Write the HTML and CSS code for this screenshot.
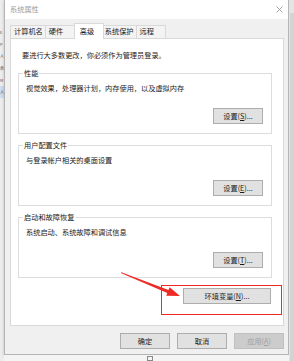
FILE: index.html
```html
<!DOCTYPE html>
<html lang="zh">

<head>
    <meta charset="UTF-8">
    <meta name="viewport" content="width=device-width, initial-scale=1.0">
    <title>系统属性</title>
    <link rel="stylesheet" href="styles.css">
</head>

<body>
    <div class="screen">
        <!-- 背后窗口露出的一条 -->
        <div class="left-strip">
            <div class="frag">E</div>
            <div class="frag">P</div>
            <div class="frag">人</div>
            <div class="frag">表</div>
            <div class="frag">M</div>
            <div class="frag frag-active">人</div>
        </div>

        <div class="main">
            <div class="window">
                <div class="title-bar">
                    <span class="title">系统属性</span>
                    <svg class="close-icon" width="7" height="7" viewBox="0 0 7 7">
                        <path d="M0.5 0.5 L6.5 6.5 M6.5 0.5 L0.5 6.5" stroke="#9a9a9a" stroke-width="0.9" fill="none" />
                    </svg>
                </div>

                <div class="dialog-body">
                    <div class="tabs">
                        <div class="tab">计算机名</div>
                        <div class="tab">硬件</div>
                        <div class="tab tab-active">高级</div>
                        <div class="tab">系统保护</div>
                        <div class="tab">远程</div>
                    </div>

                    <div class="panel">
                        <div class="intro">要进行大多数更改，你必须作为管理员登录。</div>

                        <fieldset class="group">
                            <legend>性能</legend>
                            <div class="group-text">视觉效果，处理器计划，内存使用，以及虚拟内存</div>
                            <div class="group-actions"><button class="btn">设置(<u>S</u>)...</button></div>
                        </fieldset>

                        <fieldset class="group">
                            <legend>用户配置文件</legend>
                            <div class="group-text">与登录帐户相关的桌面设置</div>
                            <div class="group-actions"><button class="btn">设置(<u>E</u>)...</button></div>
                        </fieldset>

                        <fieldset class="group">
                            <legend>启动和故障恢复</legend>
                            <div class="group-text">系统启动、系统故障和调试信息</div>
                            <div class="group-actions"><button class="btn">设置(<u>T</u>)...</button></div>
                        </fieldset>

                        <!-- 红框标注 -->
                        <div class="highlight">
                            <button class="btn btn-wide">环境变量(<u>N</u>)...</button>
                        </div>

                        <!-- 红色箭头 -->
                        <svg class="arrow" width="80" height="32" viewBox="111 269 80 32">
                            <polygon points="120.8,272.9 121.3,272.2 168.5,290.1 169.6,287.3 180,296 166.2,295.7 167.3,292.9" fill="#ee2a24" />
                        </svg>
                    </div>

                    <div class="footer">
                        <button class="btn">确定</button>
                        <button class="btn">取消</button>
                        <button class="btn btn-disabled">应用(<u>A</u>)</button>
                    </div>
                </div>
            </div>

            <div class="bottom-strip">
                <span class="task-icon"></span>
            </div>
        </div>

        <div class="right-strip">
            <div class="thumb"></div>
        </div>
    </div>
</body>

</html>
```

FILE: styles.css
```css
* {
    margin: 0;
    padding: 0;
    box-sizing: border-box;
}

body {
    background: #f2f2f2;
    font-family: "Noto Sans CJK SC", "Noto Sans", sans-serif;
    font-size: 7.2px;
    color: #1a1a1a;
    overflow: hidden;
}

.screen {
    display: flex;
    width: 294px;
    height: 361px;
}

/* 左侧背景 */
.left-strip {
    width: 4px;
    white-space: nowrap;
    background: #ededed;
    padding-top: 26px;
    font-size: 4px;
    line-height: 12px;
    color: #555;
}

.frag {
    height: 12px;
}

.frag-active {
    background: #cddcf0;
}

.main {
    display: flex;
    flex-direction: column;
    width: 285px;
}

/* 窗口 */
.window {
    height: 355px;
    display: flex;
    flex-direction: column;
    border: 1px solid #b4b4b4;
    border-top: none;
    box-shadow: 0 1px 3px rgba(0, 0, 0, 0.2);
    background: #f0f0f0;
}

.title-bar {
    height: 19px;
    display: flex;
    justify-content: space-between;
    align-items: center;
    padding: 0 5px 1px 5px;
    background: #ffffff;
}

.title {
    color: #9c9c9c;
    line-height: 10px;
}

.dialog-body {
    flex: 1;
    display: flex;
    flex-direction: column;
    padding: 4px 4px 0 5px;
}

/* 选项卡 */
.tabs {
    display: flex;
    align-items: flex-end;
    height: 15px;
}

.tab {
    height: 13px;
    min-width: 30px;
    line-height: 11px;
    padding: 0 2px 0 3px;
    border: 1px solid #d9d9d9;
    border-bottom: none;
    background: #f3f3f3;
    white-space: nowrap;
}

.tab + .tab {
    margin-left: -1px;
}

.tab-active {
    position: relative;
    z-index: 1;
    height: 16px;
    padding: 2px 4px 1px 5px;
    margin-left: -2px;
    margin-right: -2px;
    margin-bottom: -1px;
    background: #ffffff;
}

.panel {
    position: relative;
    flex: 1;
    background: #ffffff;
    border: 1px solid #d9d9d9;
    padding: 11px 11px 0 7px;
}

.intro {
    line-height: 10px;
    padding-left: 4px;
    margin-bottom: 8px;
}

/* 分组框 */
.group {
    border: 1px solid #dcdcdc;
    padding: 0 8px 9px 7px;
    min-inline-size: 0;
}

.group + .group {
    margin-top: 6px;
}

.group legend {
    line-height: 10px;
    padding: 0 1px;
    margin-left: -3px;
}

.group-text {
    line-height: 10px;
    margin-top: 5px;
}

.group-actions {
    display: flex;
    justify-content: flex-end;
    margin-top: 15px;
}

/* 按钮 */
.btn {
    width: 50px;
    height: 16px;
    background: #e1e1e1;
    border: 1px solid #adadad;
    font-family: inherit;
    font-size: 7.2px;
    color: #1a1a1a;
    line-height: 12px;
    text-align: center;
}

.btn u {
    text-decoration: underline;
    text-underline-offset: 1px;
}

.btn-wide {
    width: 88px;
}

.btn-disabled {
    background: #cccccc;
    border-color: #bfbfbf;
    color: #a0a0a0;
}

.highlight {
    display: flex;
    justify-content: flex-end;
    width: 121px;
    height: 30px;
    margin: 7px -10px 0 auto;
    padding: 2px 10px 0 0;
    border: 1px solid #f22a22;
}

.arrow {
    position: absolute;
    left: 100px;
    top: 230px;
}

.footer {
    display: flex;
    justify-content: flex-end;
    gap: 7px;
    padding: 7px 0 5px;
}

.bottom-strip {
    flex: 1;
    background: #f4f4f4;
    padding-left: 143px;
    padding-top: 1px;
}

.task-icon {
    display: block;
    width: 6px;
    height: 5px;
    border: 1px solid #8a8a8a;
}

/* 右侧滚动条 */
.right-strip {
    width: 5px;
    display: flex;
    flex-direction: column;
    background: #e4e4e4;
}

.thumb {
    flex: 1;
    margin: 13px 0 0 1px;
    background: #d3d3d3;
}
```
